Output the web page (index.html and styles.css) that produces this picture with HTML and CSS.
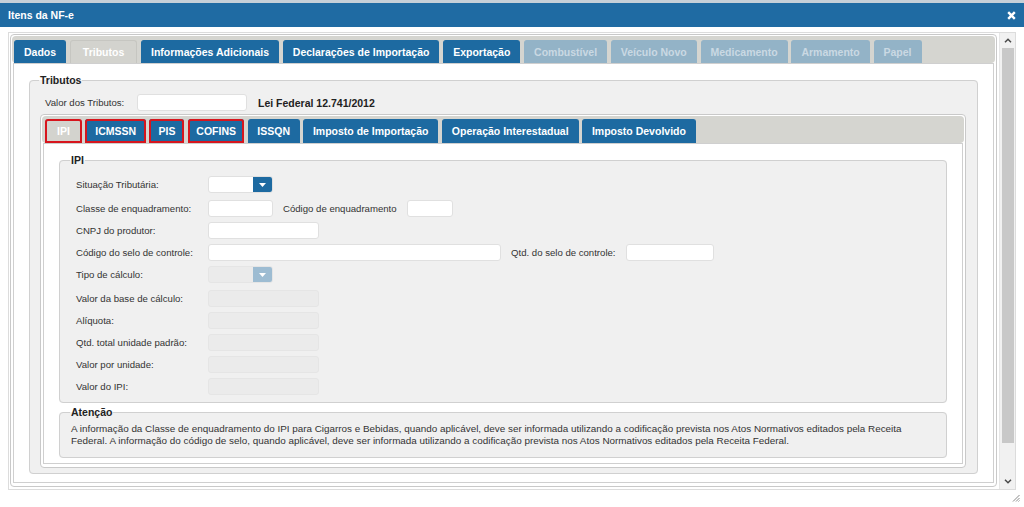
FILE: index.html
```html
<!DOCTYPE html>
<html lang="pt-BR">
<head>
<meta charset="utf-8">
<title>Itens da NF-e</title>
<link rel="stylesheet" href="styles.css">
</head>
<body>
<div class="titlebar">
  <span class="title">Itens da NF-e</span>
  <span class="close"><svg width="9" height="9" viewBox="0 0 9 9"><path d="M1.2 1.2L7.8 7.8M7.8 1.2L1.2 7.8" stroke="#fff" stroke-width="2.4"/></svg></span>
</div>
<div class="scroller">
  <div class="scroll-content">
    <div class="widget outer">
      <ul class="tabbar">
        <li class="tab">Dados</li>
        <li class="tab active">Tributos</li>
        <li class="tab">Informações Adicionais</li>
        <li class="tab">Declarações de Importação</li>
        <li class="tab">Exportação</li>
        <li class="tab disabled">Combustível</li>
        <li class="tab disabled">Veículo Novo</li>
        <li class="tab disabled">Medicamento</li>
        <li class="tab disabled">Armamento</li>
        <li class="tab disabled">Papel</li>
      </ul>
      <div class="panel outer-panel">
        <fieldset class="fs fs-tributos">
          <legend>Tributos</legend>
          <div class="row row-valor">
            <label class="lbl-valor">Valor dos Tributos:</label>
            <input class="inp w110" type="text">
            <span class="lei">Lei Federal 12.741/2012</span>
          </div>
          <div class="widget inner">
            <ul class="tabbar">
              <li class="tab active mark t-ipi">IPI</li>
              <li class="tab mark">ICMSSN</li>
              <li class="tab mark t-pis">PIS</li>
              <li class="tab mark t-cofins">COFINS</li>
              <li class="tab t-issqn">ISSQN</li>
              <li class="tab">Imposto de Importação</li>
              <li class="tab">Operação Interestadual</li>
              <li class="tab">Imposto Devolvido</li>
            </ul>
            <div class="panel inner-panel">
              <fieldset class="fs fs-ipi">
                <legend>IPI</legend>
                <div class="row sel">
                  <label class="lbl">Situação Tributária:</label>
                  <span class="sel-box"><span class="sel-btn"><svg width="7" height="4" viewBox="0 0 7 4"><path d="M0 0H7L3.5 4Z" fill="#fff"/></svg></span></span>
                </div>
                <div class="row">
                  <label class="lbl">Classe de enquadramento:</label>
                  <input class="inp w65" type="text">
                  <label class="lbl-inline">Código de enquadramento</label>
                  <input class="inp w46" type="text">
                </div>
                <div class="row">
                  <label class="lbl">CNPJ do produtor:</label>
                  <input class="inp w111" type="text">
                </div>
                <div class="row">
                  <label class="lbl">Código do selo de controle:</label>
                  <input class="inp w293" type="text">
                  <label class="lbl-inline">Qtd. do selo de controle:</label>
                  <input class="inp w88" type="text">
                </div>
                <div class="row sel">
                  <label class="lbl">Tipo de cálculo:</label>
                  <span class="sel-box off"><span class="sel-btn"><svg width="7" height="4" viewBox="0 0 7 4"><path d="M0 0H7L3.5 4Z" fill="#fff"/></svg></span></span>
                </div>
                <div class="row">
                  <label class="lbl">Valor da base de cálculo:</label>
                  <input class="inp w111" type="text" disabled>
                </div>
                <div class="row">
                  <label class="lbl">Alíquota:</label>
                  <input class="inp w111" type="text" disabled>
                </div>
                <div class="row">
                  <label class="lbl">Qtd. total unidade padrão:</label>
                  <input class="inp w111" type="text" disabled>
                </div>
                <div class="row">
                  <label class="lbl">Valor por unidade:</label>
                  <input class="inp w111" type="text" disabled>
                </div>
                <div class="row">
                  <label class="lbl">Valor do IPI:</label>
                  <input class="inp w111" type="text" disabled>
                </div>
              </fieldset>
              <fieldset class="fs fs-atencao">
                <legend>Atenção</legend>
                <p>A informação da Classe de enquadramento do IPI para Cigarros e Bebidas, quando aplicável, deve ser informada utilizando a codificação prevista nos Atos Normativos editados pela Receita<br>Federal. A informação do código de selo, quando aplicável, deve ser informada utilizando a codificação prevista nos Atos Normativos editados pela Receita Federal.</p>
              </fieldset>
            </div>
          </div>
        </fieldset>
      </div>
    </div>
  </div>
  <div class="vscroll">
    <span class="arrow"><svg width="8" height="5" viewBox="0 0 8 5"><path d="M1 4.2L4 1.2L7 4.2" fill="none" stroke="#4a4a4a" stroke-width="1.5"/></svg></span>
    <span class="thumb"></span>
    <span class="track-fill"></span>
    <span class="arrow"><svg width="8" height="5" viewBox="0 0 8 5"><path d="M1 0.8L4 3.8L7 0.8" fill="none" stroke="#4a4a4a" stroke-width="1.5"/></svg></span>
  </div>
</div>
<div class="grip-row">
  <svg width="8" height="8" viewBox="0 0 8 8"><path d="M7.5 1L1 7.5M7.5 4L4 7.5M7.5 6.5L6.5 7.5" stroke="#8a8a8a" stroke-width="1"/></svg>
</div>
</body>
</html>
```

FILE: styles.css
```css
* { box-sizing: border-box; }
html, body { margin: 0; padding: 0; }
body {
  width: 1024px;
  height: 507px;
  overflow: hidden;
  background: #fff;
  font-family: "Liberation Sans", Arial, sans-serif;
  font-size: 9.6px;
  color: #333;
}

.titlebar {
  height: 27px;
  border-top: 3px solid #c6d0d8;
  background: #1f6ba3;
  color: #fff;
  display: flex;
  align-items: center;
  justify-content: space-between;
  padding: 0 8px;
}
.title { font-weight: bold; font-size: 10.5px; }
.close { display: flex; }

.scroller {
  margin: 5px 8px 0;
  height: 458px;
  border: 1px solid #dcdcdc;
  display: flex;
}
.scroll-content { flex: 1; padding: 1px 0 0 1px; }

.widget {
  border: 1px solid #c9c9c9;
  border-radius: 4px;
  background: #fff;
  padding: 1px 1px 3px;
}
.widget.outer { width: 987px; }
.widget.inner { margin: 3px 0 0 1px; }

.tabbar {
  list-style: none;
  margin: 0;
  padding: 4px 2px 0;
  height: 27px;
  background: #d5d5d0;
  border-radius: 4px;
  display: flex;
  gap: 3.75px;
}
.inner .tabbar { padding: 3px 3px 0; gap: 3.4px; }

.tab {
  height: 23px;
  line-height: 22px;
  padding: 0 9px;
  border: 1px solid #1d6aa1;
  border-bottom: 0;
  border-radius: 3px 3px 0 0;
  background: #1d6aa1;
  color: #fff;
  font-weight: bold;
  font-size: 10.5px;
  white-space: nowrap;
}
.inner .tab { height: 24px; line-height: 23px; }
.tab.active { background: #d3d3ce; border-color: #c6c6c1; color: #fff; padding: 0 12px; }
.tab.disabled { background: #93b3c7; border-color: #93b3c7; color: #cad9e3; }
.tab.mark { outline: 2px solid #d7151d; outline-offset: -2px; }
.inner .tab.t-ipi { padding: 0 11px; }
.inner .tab.t-pis { padding: 0 8px; }
.inner .tab.t-cofins { padding: 0 7.5px; }
.inner .tab.t-issqn { padding: 0 8.5px; }

.panel {
  background: #fff;
  border: 1px solid #cfcfcf;
  margin: 0 1px;
}
.outer-panel { padding: 10px 15px 8px; }
.inner-panel { padding: 10px 15px 5px; }

.fs {
  margin: 0;
  min-width: 0;
  border: 1px solid #d0d0d0;
  border-radius: 4px;
  background: #f0f0f0;
}
.fs legend {
  padding: 0 1px;
  font-weight: bold;
  font-size: 10.5px;
  line-height: 12px;
  color: #222;
}
.fs-tributos { padding: 8px 11px 5px 9px; }
.fs-ipi { padding: 10px 10px 7px; }
.fs-atencao { margin-top: 3px; padding: 5px 10px 10px; }
.fs-atencao p { margin: 0; padding-left: 1px; line-height: 12px; font-size: 9.9px; white-space: nowrap; }

.row { display: flex; align-items: center; height: 17px; }
.row-valor { padding-left: 6px; }
.lbl-valor { width: 92px; flex: none; }
.lei { margin-left: 11px; font-weight: bold; font-size: 10.5px; color: #222; }

.fs-ipi .row { padding-left: 6px; margin-bottom: 5px; }
.fs-ipi .row.sel { margin-bottom: 7px; }
.fs-ipi .row:last-child { margin-bottom: 0; }
.lbl { width: 132px; flex: none; }
.lbl-inline { margin: 0 10px; white-space: nowrap; }

.inp {
  height: 17px;
  border: 1px solid #e0e0e0;
  border-radius: 3px;
  background: #fff;
  padding: 0 3px;
  margin: 0;
  font: inherit;
  flex: none;
}
.inp:disabled { background: #ebebeb; border-color: #e5e5e5; }
.w46 { width: 46px; }
.w65 { width: 65px; }
.w88 { width: 88px; }
.w110 { width: 110px; }
.w111 { width: 111px; }
.w293 { width: 293px; }

.sel-box {
  width: 65px;
  height: 17px;
  display: flex;
  border: 1px solid #e0e0e0;
  border-radius: 3px;
  background: #fff;
  overflow: hidden;
  flex: none;
}
.sel-btn {
  margin-left: auto;
  width: 19px;
  background: #1d6aa1;
  display: flex;
  align-items: center;
  justify-content: center;
}
.sel-box.off { background: #ebebeb; border-color: #e5e5e5; }
.sel-box.off .sel-btn { background: #9dbcd2; }

.vscroll {
  width: 16px;
  flex: none;
  background: #f1f1f1;
  border-left: 1px solid #e6e6e6;
  display: flex;
  flex-direction: column;
  align-items: center;
}
.arrow { height: 15px; width: 100%; display: flex; align-items: center; justify-content: center; flex: none; }
.thumb { width: 12px; height: 395px; background: #c8c8c8; flex: none; }
.track-fill { flex: 1; }

.grip-row {
  display: flex;
  justify-content: flex-end;
  padding: 4px 4px 0 0;
}
.grip-row svg { display: block; }
```
